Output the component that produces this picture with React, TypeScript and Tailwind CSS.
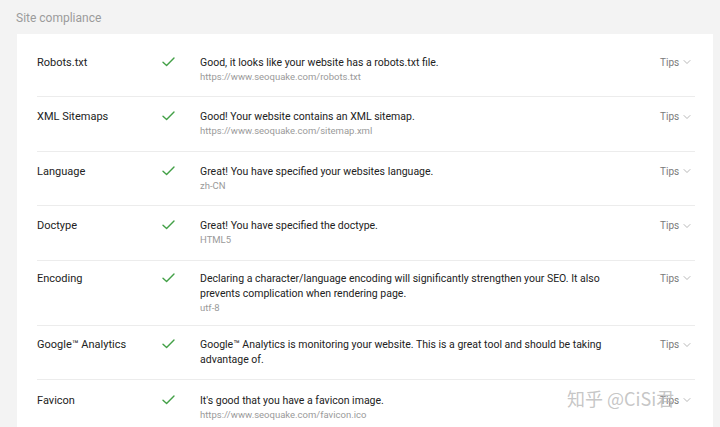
import { ChevronDown } from "lucide-react";

type Row = { label: string; text: string; sub?: string };

const ROWS: Row[] = [
  { label: "Robots.txt", text: "Good, it looks like your website has a robots.txt file.", sub: "https://www.seoquake.com/robots.txt" },
  { label: "XML Sitemaps", text: "Good! Your website contains an XML sitemap.", sub: "https://www.seoquake.com/sitemap.xml" },
  { label: "Language", text: "Great! You have specified your websites language.", sub: "zh-CN" },
  { label: "Doctype", text: "Great! You have specified the doctype.", sub: "HTML5" },
  {
    label: "Encoding",
    text: "Declaring a character/language encoding will significantly strengthen your SEO. It also prevents complication when rendering page.",
    sub: "utf-8",
  },
  {
    label: "Google™ Analytics",
    text: "Google™ Analytics is monitoring your website. This is a great tool and should be taking advantage of.",
  },
  { label: "Favicon", text: "It's good that you have a favicon image.", sub: "https://www.seoquake.com/favicon.ico" },
];

function Check() {
  return (
    <svg width="13" height="10" viewBox="0 0 13 10" fill="none" className="mt-[2px]">
      <path d="M1 5.2 L4.6 8.6 L12 1" stroke="#43a047" strokeWidth="1.4" strokeLinecap="round" strokeLinejoin="round" />
    </svg>
  );
}

function ComplianceRow({ row, last }: { row: Row; last: boolean }) {
  return (
    <div className={`flex min-h-[54.5px] items-center py-[10px] ${last ? "" : "border-b border-[#ececec]"}`}>
      <div className="flex w-full items-start">
        <div className="w-[125px] shrink-0 text-[11px] leading-[15px] text-[#222]">{row.label}</div>
        <div className="w-[38px] shrink-0">
          <Check />
        </div>
        <div className="min-w-0 flex-1 pr-[50px]">
          <div className="text-[10.5px] leading-[15px] text-[#222]">{row.text}</div>
          {row.sub && <div className="text-[9.5px] leading-[14px] text-[#9a9a9a]">{row.sub}</div>}
        </div>
        <div className="flex w-[35px] shrink-0 items-center gap-[2px] text-[10px] leading-[15px] text-[#7a7a7a]">
          Tips
          <ChevronDown size={12} strokeWidth={1.4} className="text-[#999]" />
        </div>
      </div>
    </div>
  );
}

export default function App() {
  return (
    <div className="relative h-[427px] w-[720px] overflow-hidden bg-[#f3f3f3] font-['Roboto',sans-serif]">
      <div className="px-4 pt-[11px] pb-[8px] text-[12px] leading-[15px] text-[#9b9b9b]">Site compliance</div>
      <div className="ml-[17px] mr-[7px] bg-white pl-[20px] pr-[18px] pt-[8.5px]">
        {ROWS.map((r, i) => (
          <ComplianceRow key={r.label} row={r} last={i === ROWS.length - 1} />
        ))}
      </div>
      <div className="absolute left-[567px] top-[386px] text-[18px] leading-[24px] text-[#b8b8b8]/80 font-['Noto_Sans_CJK_SC',sans-serif]">
        知乎 @CiSi君
      </div>
    </div>
  );
}
